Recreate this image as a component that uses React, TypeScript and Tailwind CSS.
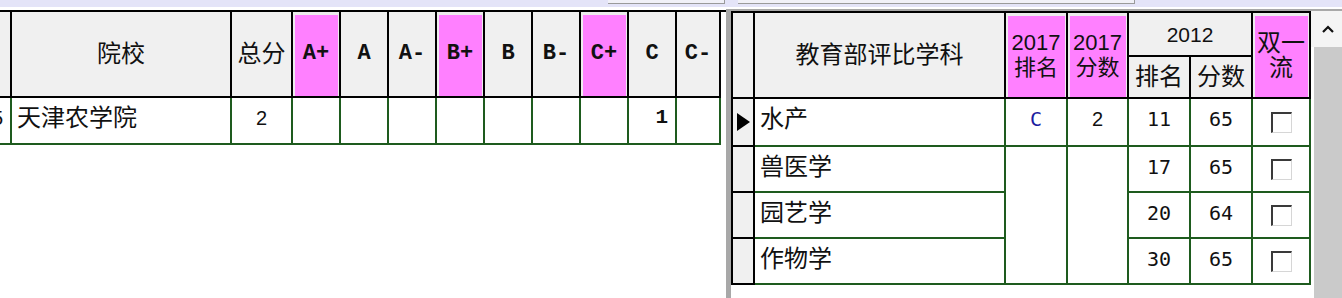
import React from 'react';

// grade columns of the school score table; pink ones have no data (grey cell)
const grades = [
  { label: 'A+', pink: true },
  { label: 'A', pink: false },
  { label: 'A-', pink: false },
  { label: 'B+', pink: true },
  { label: 'B', pink: false },
  { label: 'B-', pink: false },
  { label: 'C+', pink: true },
  { label: 'C', pink: false, value: '1' },
  { label: 'C-', pink: false },
];

const subjects = [
  { name: '水产', rank: '11', score: '65' },
  { name: '兽医学', rank: '17', score: '65' },
  { name: '园艺学', rank: '20', score: '64' },
  { name: '作物学', rank: '30', score: '65' },
];

const cjk = "font-['Liberation_Sans','Noto_Sans_CJK_SC',sans-serif]";
const mono = "font-['DejaVu_Sans_Mono','Noto_Sans_CJK_SC',monospace]";
const slab = "font-['Liberation_Mono',monospace]";

const headCell = 'flex items-center justify-center border-b-2 border-r-2 border-black bg-[#f0f0f0]';
const pinkCell =
  'flex items-center justify-center border-b-2 border-r-2 border-black bg-[#ff80ff] shadow-[inset_2px_3px_0_#ececec,inset_-1px_0_0_#ececec]';
const dataCell = 'border-b-2 border-r-2 border-[#1e5b1e] bg-white';

function CheckBox() {
  return (
    <span className="block h-[21px] w-[21px] border-b border-l-2 border-r border-t-2 border-b-[#d6d6d6] border-l-[#3a3a3a] border-r-[#d6d6d6] border-t-[#3a3a3a] bg-white" />
  );
}

function SchoolTable() {
  return (
    <div className="grid grid-cols-[12px_220px_61px_repeat(8,48px)_44px] grid-rows-[86px_47px] border-t-2 border-black text-[#111]">
      <div className={headCell} />
      <div className={`${headCell} ${cjk} text-[24px] leading-none`}>院校</div>
      <div className={`${headCell} ${cjk} text-[24px] leading-none`}>总分</div>
      {grades.map((g) => (
        <div key={g.label} className={`${g.pink ? pinkCell : headCell} ${slab} text-[22px] font-bold leading-none`}>
          {g.label}
        </div>
      ))}

      <div className={`${dataCell} flex items-center justify-end overflow-hidden pb-[6px] pr-[7px] ${cjk} text-[20px] leading-none`}>
        5
      </div>
      <div className={`${dataCell} flex items-center pb-[6px] pl-[5px] ${cjk} text-[24px] leading-none`}>天津农学院</div>
      <div className={`${dataCell} flex items-center justify-center pb-[6px] ${cjk} text-[20px] leading-none`}>2</div>
      {grades.map((g) => (
        <div
          key={g.label}
          className={`${dataCell} flex items-center justify-end pb-[6px] pr-[7px] ${slab} text-[21px] font-bold leading-none ${g.pink ? 'bg-[#c0c0c0]' : ''}`}
        >
          {g.value}
        </div>
      ))}
    </div>
  );
}

function SubjectTable() {
  return (
    <div className="grid w-[580px] grid-cols-[22px_251px_62px_61px_62px_62px_58px] grid-rows-[44px_42px_48px_46px_46px_46px] self-start border-l-2 border-t-2 border-black text-[#111]">
      <div className={`${headCell} row-span-2`} />
      <div className={`${headCell} row-span-2 ${cjk} text-[24px] leading-none`}>教育部评比学科</div>
      <div className={`${pinkCell} row-span-2 flex-col ${cjk} text-[22px] leading-[25px]`}>
        <span>2017</span>
        <span>排名</span>
      </div>
      <div className={`${pinkCell} row-span-2 flex-col ${cjk} text-[22px] leading-[25px]`}>
        <span>2017</span>
        <span>分数</span>
      </div>
      <div className={`${headCell} col-span-2 ${cjk} text-[21px] leading-none`}>2012</div>
      <div className={`${pinkCell} row-span-2 px-[3px] text-center ${cjk} text-[24px] leading-[25px]`}>双一流</div>
      <div className={`${headCell} ${cjk} text-[24px] leading-none`}>排名</div>
      <div className={`${headCell} ${cjk} text-[24px] leading-none`}>分数</div>

      {subjects.map((s, i) => (
        <React.Fragment key={s.name}>
          <div className="flex items-center justify-center border-b-2 border-r-2 border-black bg-[#f0f0f0]">
            {i === 0 && (
              <svg width="13" height="18" viewBox="0 0 13 18">
                <polygon points="0,0 13,9 0,18" fill="#000" />
              </svg>
            )}
          </div>
          <div className={`${dataCell} flex items-start pl-[5px] pt-[8px] ${cjk} text-[24px] leading-none`}>{s.name}</div>
          {i === 0 && (
            <>
              <div className={`${dataCell} flex items-start justify-center pt-[10px] ${mono} text-[20px] leading-none text-[#1c1ca0]`}>
                C
              </div>
              <div className={`${dataCell} flex items-start justify-center pt-[10px] ${cjk} text-[20px] leading-none`}>2</div>
            </>
          )}
          {i === 1 && (
            <>
              <div className={`${dataCell} row-span-3`} />
              <div className={`${dataCell} row-span-3`} />
            </>
          )}
          <div className={`${dataCell} flex items-start justify-center pt-[10px] ${mono} text-[20px] leading-none`}>{s.rank}</div>
          <div className={`${dataCell} flex items-start justify-center pt-[10px] ${mono} text-[20px] leading-none`}>{s.score}</div>
          <div className={`${dataCell} flex items-center justify-center`}>
            <CheckBox />
          </div>
        </React.Fragment>
      ))}
    </div>
  );
}

export default function App() {
  return (
    <div className="flex h-[298px] w-[1342px] flex-col overflow-hidden bg-white">
      {/* tab strip */}
      <div className="flex h-[7px] shrink-0 items-start bg-[#e4e4f8]">
        <div className="w-[608px]" />
        <div className="h-[4px] w-[117px] border-b border-r border-[#9a9a9a] bg-[#f1f1f8]" />
        <div className="w-[13px]" />
        <div className="h-[4px] w-[397px] border-b border-r border-[#9a9a9a] bg-[#f1f1f8]" />
      </div>

      <div className="flex flex-1">
        <div className="w-[726px] shrink-0 pt-[3px]">
          <SchoolTable />
        </div>

        <div className="mt-[2px] flex flex-1 border-l-[5px] border-t-2 border-[#a8a8a8] bg-white">
          <SubjectTable />
          <div className="flex w-[31px] flex-col">
            <div className="flex h-[36px] items-center justify-center bg-[#f4f4f4] pl-[2px]">
              <svg width="14" height="10" viewBox="0 0 14 10">
                <path d="M2 8 L7 3 L12 8" fill="none" stroke="#111" strokeWidth="2.2" />
              </svg>
            </div>
            <div className="ml-[3px] flex-1 bg-[#cacaca]" />
          </div>
        </div>
      </div>
    </div>
  );
}
